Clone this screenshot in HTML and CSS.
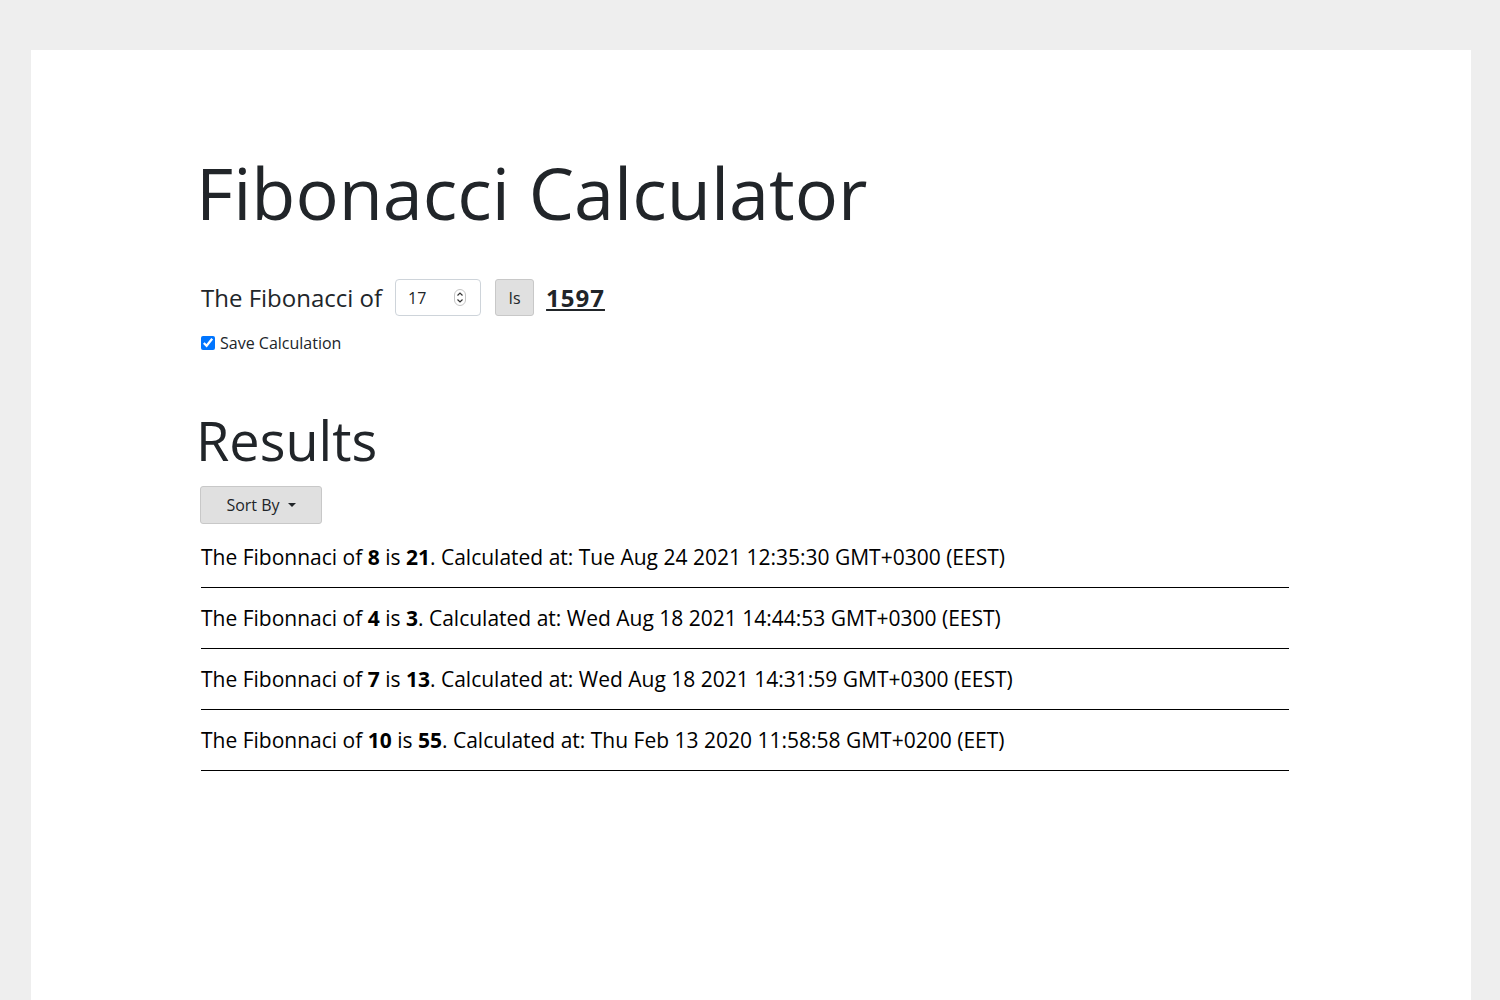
FILE: index.html
```html
<!DOCTYPE html>
<html lang="en">
<head>
<meta charset="utf-8">
<title>Fibonacci Calculator</title>
<link rel="stylesheet" href="styles.css">
</head>
<body>
<div class="page">
  <div class="container">
    <h1 class="title">Fibonacci Calculator</h1>
    <div class="calc">
      <div class="calc-row">
        <span class="calc-label">The Fibonacci of</span>
        <span class="num-wrap">
          <input class="num-input" type="number" value="17">
          <svg class="spin" width="12" height="17" viewBox="0 0 12 17">
            <rect x="0.5" y="0.5" width="11" height="16" rx="5.5" fill="#fff" stroke="#c4c4c4"/>
            <path d="M3.5 6.5 L6 4 L8.5 6.5" fill="none" stroke="#333" stroke-width="1.2"/>
            <path d="M3.5 10.5 L6 13 L8.5 10.5" fill="none" stroke="#333" stroke-width="1.2"/>
          </svg>
        </span>
        <button class="btn is-btn">Is</button>
        <span class="result">1597</span>
      </div>
      <label class="save">
        <input type="checkbox" checked class="save-box">
        <span>Save Calculation</span>
      </label>
    </div>
    <h2 class="results-title">Results</h2>
    <div class="results">
      <button class="btn sort-btn">Sort By <span class="caret"></span></button>
      <ul class="result-list">
        <li class="result-item">The Fibonnaci of <b>8</b> is <b>21</b>. Calculated at: Tue Aug 24 2021 12:35:30 GMT+0300 (EEST)</li>
        <li class="result-item">The Fibonnaci of <b>4</b> is <b>3</b>. Calculated at: Wed Aug 18 2021 14:44:53 GMT+0300 (EEST)</li>
        <li class="result-item">The Fibonnaci of <b>7</b> is <b>13</b>. Calculated at: Wed Aug 18 2021 14:31:59 GMT+0300 (EEST)</li>
        <li class="result-item">The Fibonnaci of <b>10</b> is <b>55</b>. Calculated at: Thu Feb 13 2020 11:58:58 GMT+0200 (EET)</li>
      </ul>
    </div>
  </div>
</div>
</body>
</html>
```

FILE: styles.css
```css
html, body {
  margin: 0;
  padding: 0;
  background: #eeeeee;
  font-family: "Open Sans", "Liberation Sans", sans-serif;
  color: #212529;
}

.page {
  margin: 50px 29px 0 31px;
  background: #ffffff;
  min-height: 950px;
}

.container {
  padding: 99px 0 0 165px;
}

.title {
  margin: 0;
  font-size: 72px;
  font-weight: 400;
  line-height: 1.2;
  color: #212529;
}

.calc {
  margin: 44px 0 0 5px;
}

.calc-row {
  display: flex;
  align-items: center;
  height: 37px;
}

.calc-label {
  font-size: 24px;
  margin-right: 13px;
}

.num-wrap {
  position: relative;
  display: inline-flex;
  margin-right: 14px;
}

.num-input {
  box-sizing: border-box;
  width: 86px;
  height: 37px;
  border: 1px solid #ced4da;
  border-radius: 4px;
  padding: 0 8px 0 12px;
  font-family: "Open Sans", sans-serif;
  font-size: 16px;
  color: #212529;
  -moz-appearance: textfield;
}

.num-input::-webkit-inner-spin-button,
.num-input::-webkit-outer-spin-button {
  -webkit-appearance: none;
  margin: 0;
}

.spin {
  position: absolute;
  left: 59px;
  top: 10px;
}

.btn {
  box-sizing: border-box;
  background: #e0e0e0;
  border: 1px solid #c8c8c8;
  border-radius: 3px;
  font-family: "Open Sans", sans-serif;
  font-size: 16px;
  color: #212529;
  padding: 0;
}

.is-btn {
  width: 39px;
  height: 37px;
  margin-right: 12px;
}

.result {
  font-size: 24px;
  font-weight: 700;
  letter-spacing: 1px;
  text-decoration: underline;
}

.save {
  display: flex;
  align-items: center;
  margin-top: 16px;
  font-size: 16px;
}

.save-box {
  margin: 0 5px 0 0;
  width: 14px;
  height: 14px;
}

.results-title {
  margin: 54px 0 0 0;
  font-size: 54px;
  font-weight: 400;
  line-height: 1.2;
}

.results {
  margin: 13px 0 0 4px;
}

.sort-btn {
  width: 122px;
  height: 38px;
  display: flex;
  align-items: center;
  justify-content: center;
  gap: 8px;
}

.caret {
  width: 0;
  height: 0;
  border-left: 4px solid transparent;
  border-right: 4px solid transparent;
  border-top: 4px solid #212529;
}

.result-list {
  list-style: none;
  margin: 3px 0 0 1px;
  padding: 0;
  width: 1088px;
}

.result-item {
  padding: 15px 0;
  font-size: 21px;
  line-height: 30px;
  color: #000000;
  border-bottom: 1px solid #000000;
}
```
